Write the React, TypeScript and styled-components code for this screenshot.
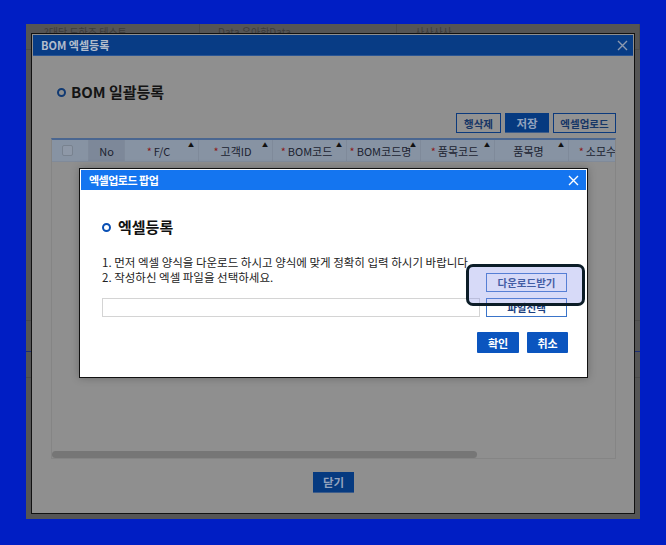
import styled, { createGlobalStyle } from 'styled-components';

const GlobalStyle = createGlobalStyle`
    html, body {
        margin: 0;
        padding: 0;
    }
    body {
        width: 666px;
        height: 545px;
        overflow: hidden;
        background: #001ec4;
        font-family: "Noto Sans CJK KR", "Noto Sans", sans-serif;
    }
    * {
        box-sizing: border-box;
    }
`;

const columns = [
    { label: 'F/C', required: true },
    { label: '고객ID', required: true },
    { label: 'BOM코드', required: true },
    { label: 'BOM코드명', required: true },
    { label: '품목코드', required: true },
    { label: '품목명', required: false },
    { label: '소모수량', required: true },
];

function CloseIcon({ color }: { color: string }) {
    return (
        <svg width="11" height="11" viewBox="0 0 11 11">
            <path d="M1 1 L10 10 M10 1 L1 10" stroke={color} strokeWidth="1.4" fill="none" />
        </svg>
    );
}

function App() {
    return (
        <Stage>
            <GlobalStyle />
            <Backdrop>
                <BackRow>
                    <BackCell>?대당 도하조 테스트</BackCell>
                    <BackCell>Data 우아한Data</BackCell>
                    <BackCell>사사사사</BackCell>
                </BackRow>
                <BackLine $top={296} />
                <BackLine $top={327} $blue />
                <BackLine $top={353} />

                <Dialog>
                    <TitleBar>
                        <span>BOM 엑셀등록</span>
                        <CloseIcon color="#8d9ab0" />
                    </TitleBar>
                    <DialogBody>
                        <SectionTitle>
                            <Ring $color="#113a73" />
                            BOM 일괄등록
                        </SectionTitle>
                        <Toolbar>
                            <OutlineButton $width={45}>행삭제</OutlineButton>
                            <FillButton $width={44}>저장</FillButton>
                            <OutlineButton $width={63}>엑셀업로드</OutlineButton>
                        </Toolbar>
                        <Grid>
                            <HeaderRow>
                                <HeadCell>
                                    <Check />
                                </HeadCell>
                                <HeadCell $dark>No</HeadCell>
                                {columns.map((c) => (
                                    <HeadCell key={c.label}>
                                        {c.required && <Star>*</Star>}
                                        {c.label}
                                        <SortMark>▲</SortMark>
                                    </HeadCell>
                                ))}
                            </HeaderRow>
                            <GridBody />
                            <ScrollTrack>
                                <ScrollThumb />
                            </ScrollTrack>
                        </Grid>
                        <Footer>
                            <FillButton $width={41} $height={21}>
                                닫기
                            </FillButton>
                        </Footer>
                    </DialogBody>
                </Dialog>
            </Backdrop>

            <Popup>
                <PopupTitle>
                    <span>엑셀업로드 팝업</span>
                    <CloseIcon color="#ffffff" />
                </PopupTitle>
                <PopupBody>
                    <PopupHeading>
                        <Ring $color="#0a50b5" />
                        엑셀등록
                    </PopupHeading>
                    <UploadRow>
                        <UploadMain>
                            <Guide>
                                1. 먼저 엑셀 양식을 다운로드 하시고 양식에 맞게 정확히 입력 하시기 바랍니다.
                                <br />
                                2. 작성하신 엑셀 파일을 선택하세요.
                            </Guide>
                            <FileField />
                        </UploadMain>
                        <UploadSide>
                            <LineButton>다운로드받기</LineButton>
                            <LineButton>파일선택</LineButton>
                        </UploadSide>
                    </UploadRow>
                    <Actions>
                        <BlueButton $width={42}>확인</BlueButton>
                        <BlueButton $width={41}>취소</BlueButton>
                    </Actions>
                </PopupBody>
            </Popup>

            <Spotlight />
        </Stage>
    );
}

export default App;

/** 전체 화면 */
const Stage = styled.div`
    position: relative;
    width: 666px;
    height: 545px;
    padding: 24px 26px 0 26px;
`;

/** 딤 처리된 뒤쪽 페이지 */
const Backdrop = styled.div`
    position: relative;
    width: 614px;
    height: 495px;
    background: #555555;
    overflow: hidden;
`;
const BackRow = styled.div`
    display: grid;
    grid-template-columns: 174px 197px 1fr;
    height: 26px;
    border-bottom: 1px solid #4b4b4b;
`;
const BackCell = styled.div`
    border-right: 1px solid #4b4b4b;
    padding: 3px 0 0 18px;
    font-size: 10px;
    line-height: 10px;
    color: #3c3c3c;
    white-space: nowrap;
    overflow: hidden;
`;
const BackLine = styled.div<{ $top: number; $blue?: boolean }>`
    position: absolute;
    left: 0;
    right: 0;
    top: ${(p) => p.$top}px;
    height: 1px;
    background: ${(p) => (p.$blue ? '#1c2f78' : '#4b4b4b')};
`;

/** BOM 엑셀등록 창 */
const Dialog = styled.div`
    position: absolute;
    left: 5px;
    top: 9px;
    width: 604px;
    height: 481px;
    display: flex;
    flex-direction: column;
    padding: 1px;
    border: 1px solid #111;
    background: #8f8f8f;
`;
const TitleBar = styled.div`
    display: flex;
    align-items: center;
    justify-content: space-between;
    height: 21px;
    padding: 0 5px 0 8px;
    background: #083c85;
    border-bottom: 1px solid #2a5594;
    color: #b3bdcc;
    font-size: 11px;
    font-weight: 700;
`;
const DialogBody = styled.div`
    flex: 1;
    display: flex;
    flex-direction: column;
    padding: 27px 17px 0 18px;
`;
const SectionTitle = styled.h2`
    display: flex;
    align-items: center;
    gap: 5px;
    margin: 0 0 0 6px;
    height: 18px;
    font-size: 15px;
    line-height: 18px;
    font-weight: 700;
    color: #141414;
`;
const Ring = styled.span<{ $color: string }>`
    width: 9px;
    height: 9px;
    border-radius: 50%;
    border: 2.5px solid ${(p) => p.$color};
`;
const Toolbar = styled.div`
    display: flex;
    justify-content: flex-end;
    gap: 4px;
    margin-top: 12px;
`;
const OutlineButton = styled.button<{ $width: number }>`
    width: ${(p) => p.$width}px;
    height: 20px;
    padding: 0;
    border: 1px solid #0c3a7d;
    background: #929292;
    color: #163666;
    font-family: inherit;
    font-size: 10.5px;
    font-weight: 700;
`;
const FillButton = styled.button<{ $width: number; $height?: number }>`
    width: ${(p) => p.$width}px;
    height: ${(p) => p.$height ?? 20}px;
    padding: 0;
    border: none;
    border-bottom: 1px solid #3c5c8a;
    background: #063a80;
    color: #93a3bd;
    font-family: inherit;
    font-size: 11.5px;
    font-weight: 700;
`;

/** 그리드 */
const Grid = styled.div`
    display: flex;
    flex-direction: column;
    margin-top: 5px;
    height: 321px;
    border: 1px solid #858585;
    border-top: 2px solid #4a6690;
    overflow: hidden;
`;
const HeaderRow = styled.div`
    display: grid;
    grid-template-columns: 37px 36px repeat(7, 74px);
    height: 22px;
    background: #8793a3;
    border-bottom: 1px solid #808a99;
`;
const HeadCell = styled.div<{ $dark?: boolean }>`
    position: relative;
    display: flex;
    align-items: center;
    justify-content: center;
    padding-right: ${(p) => (p.$dark ? 0 : 6)}px;
    overflow: hidden;
    white-space: nowrap;
    background: ${(p) => (p.$dark ? '#7d8899' : 'transparent')};
    border-right: 1px solid #7f8a9a;
    font-size: 11px;
    color: #1b2230;
`;
const Check = styled.span`
    width: 11px;
    height: 11px;
    border-radius: 2px;
    background: #8e98a7;
    border: 1px solid #78828f;
`;
const Star = styled.span`
    color: #8c1a1a;
    margin-right: 2px;
`;
const SortMark = styled.span`
    position: absolute;
    top: 2px;
    right: 4px;
    font-size: 6px;
    line-height: 6px;
    color: #111;
    background: #8793a3;
    padding-left: 1px;
`;
const GridBody = styled.div`
    flex: 1;
`;
const ScrollTrack = styled.div`
    height: 7px;
`;
const ScrollThumb = styled.div`
    width: 425px;
    height: 7px;
    border-radius: 4px;
    background: #767676;
`;
const Footer = styled.div`
    display: flex;
    justify-content: center;
    margin-top: 13px;
`;

/** 엑셀업로드 팝업 */
const Popup = styled.div`
    position: absolute;
    left: 79px;
    top: 168px;
    width: 509px;
    height: 210px;
    padding: 1px;
    border: 1px solid #111;
    background: #fff;
    box-shadow: 0 0 8px rgba(0, 0, 0, 0.25);
`;
const PopupTitle = styled.div`
    display: flex;
    align-items: center;
    justify-content: space-between;
    height: 20px;
    padding: 0 7px 0 8px;
    background: #1475f0;
    color: #fff;
    font-size: 11px;
    font-weight: 700;
    letter-spacing: -0.5px;
`;
const PopupBody = styled.div`
    padding: 28px 19px 0 21px;
`;
const PopupHeading = styled.h3`
    display: flex;
    align-items: center;
    gap: 7px;
    margin: 0;
    height: 18px;
    font-size: 15px;
    line-height: 18px;
    font-weight: 700;
    color: #111;
`;
const UploadRow = styled.div`
    display: flex;
    align-items: flex-end;
    gap: 6px;
    margin-top: 19px;
`;
const UploadMain = styled.div`
    flex: 1;
    display: flex;
    flex-direction: column;
`;
const Guide = styled.p`
    margin: 0;
    font-size: 11.5px;
    line-height: 15px;
    color: #222;
    white-space: nowrap;
`;
const FileField = styled.div`
    margin-top: 13px;
    height: 19px;
    border: 1px solid #d4d4d4;
`;
const UploadSide = styled.div`
    display: flex;
    flex-direction: column;
    gap: 6px;
    width: 81px;
`;
const LineButton = styled.button`
    height: 19px;
    padding: 0;
    border: 1px solid #3a74c9;
    background: transparent;
    color: #1b3f80;
    font-family: inherit;
    font-size: 10.5px;
    font-weight: 700;
`;
const Actions = styled.div`
    display: flex;
    justify-content: flex-end;
    gap: 8px;
    margin-top: 15px;
    margin-right: -1px;
`;
const BlueButton = styled.button<{ $width: number }>`
    width: ${(p) => p.$width}px;
    height: 21px;
    padding: 0;
    border: none;
    border-radius: 1px;
    background: #0b55bf;
    color: #fff;
    font-family: inherit;
    font-size: 11px;
    font-weight: 700;
`;

/** 다운로드 버튼 강조 박스 */
const Spotlight = styled.div`
    position: absolute;
    left: 466px;
    top: 264px;
    width: 119px;
    height: 42px;
    border: 3px solid #0c1d28;
    border-radius: 7px;
    background: rgba(140, 150, 235, 0.35);
`;
